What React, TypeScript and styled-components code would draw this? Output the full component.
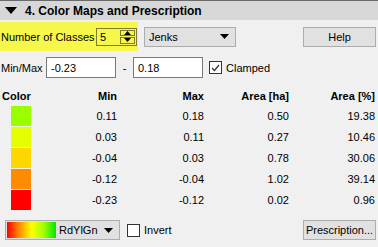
import React from "react";
import styled, { createGlobalStyle } from "styled-components";

const GlobalStyle = createGlobalStyle`
  html, body {
    margin: 0;
    padding: 0;
    background: #f0f0f0;
  }
  body {
    font-family: "Liberation Sans", Arial, sans-serif;
    font-size: 11px;
    color: #000;
  }
`;

const Panel = styled.div`
  width: 378px;
  height: 247px;
  display: flex;
  flex-direction: column;
  overflow: hidden;
`;

const Header = styled.div`
  height: 20px;
  border-top: 1px solid #6a6a6a;
  background: #d7d7d7;
  display: flex;
  align-items: center;
  padding-left: 5px;
  gap: 8px;
  box-sizing: border-box;
`;

const Title = styled.div`
  font-weight: bold;
  font-size: 12px;
  color: #000;
`;

const Row = styled.div<{ top: number }>`
  display: flex;
  align-items: center;
  margin-top: ${(p) => p.top}px;
`;

const Highlight = styled.div`
  width: 138px;
  height: 29px;
  background: #f7f74b;
  display: flex;
  align-items: center;
  padding-left: 1px;
  box-sizing: border-box;
`;

const Label = styled.span<{ w?: number }>`
  display: inline-block;
  width: ${(p) => (p.w ? `${p.w}px` : "auto")};
  white-space: nowrap;
`;

const SpinBox = styled.div`
  width: 41px;
  height: 18px;
  border: 1px solid #7d7d2c;
  box-sizing: border-box;
  display: flex;
  align-items: stretch;
`;

const SpinValue = styled.div`
  flex: 1;
  padding-left: 3px;
  display: flex;
  align-items: center;
`;

const SpinButtons = styled.div`
  width: 15px;
  display: flex;
  flex-direction: column;
  padding: 1px 1px 1px 0;
  gap: 1px;
`;

const SpinBtn = styled.div`
  flex: 1;
  border: 1px solid #7d7d2c;
  display: flex;
  align-items: center;
  justify-content: center;
`;

const Combo = styled.div<{ w: number }>`
  width: ${(p) => p.w}px;
  height: 20px;
  background: #e1e1e1;
  border: 1px solid #adadad;
  box-sizing: border-box;
  display: flex;
  align-items: center;
  padding: 0 6px 0 4px;
  gap: 3px;
`;

const ComboText = styled.span`
  flex: 1;
`;

const Button = styled.div<{ w: number }>`
  width: ${(p) => p.w}px;
  height: 20px;
  background: #e1e1e1;
  border: 1px solid #adadad;
  box-sizing: border-box;
  display: flex;
  align-items: center;
  justify-content: center;
  margin-left: auto;
  margin-right: 2px;
`;

const Input = styled.div<{ w: number }>`
  width: ${(p) => p.w}px;
  height: 21px;
  background: #fff;
  border: 1px solid #7a7a7a;
  box-sizing: border-box;
  display: flex;
  align-items: center;
  padding-left: 4px;
`;

const Dash = styled.span`
  width: 17px;
  text-align: center;
`;

const Check = styled.div<{ ml: number }>`
  width: 13px;
  height: 13px;
  background: #fff;
  border: 1px solid #333;
  box-sizing: border-box;
  margin-left: ${(p) => p.ml}px;
  margin-right: 4px;
  display: flex;
  align-items: center;
  justify-content: center;
`;

const Table = styled.div`
  margin-top: 8px;
  display: grid;
  grid-template-columns: 40px 75px 87px 85px 86px;
  grid-auto-rows: 21px;
  grid-template-rows: 19px;
  padding-left: 2px;
`;

const HeadCell = styled.div<{ right?: boolean }>`
  font-weight: bold;
  display: flex;
  align-items: center;
  justify-content: ${(p) => (p.right ? "flex-end" : "flex-start")};
`;

const Cell = styled.div`
  display: flex;
  align-items: center;
  justify-content: flex-end;
`;

const SwatchCell = styled.div`
  display: flex;
  align-items: center;
  padding-left: 9px;
`;

const Swatch = styled.div<{ c: string }>`
  width: 20px;
  height: 20px;
  background: ${(p) => p.c};
`;

const Gradient = styled.div`
  width: 49px;
  height: 16px;
  background: linear-gradient(to right, #ff0000 0%, #ff8c00 25%, #ffff00 50%, #a0ff00 75%, #00e600 100%);
`;

const classes = [
  { c: "#99ff00", min: "0.11", max: "0.18", ha: "0.50", pct: "19.38" },
  { c: "#e5ff00", min: "0.03", max: "0.11", ha: "0.27", pct: "10.46" },
  { c: "#ffd700", min: "-0.04", max: "0.03", ha: "0.78", pct: "30.06" },
  { c: "#ff8c00", min: "-0.12", max: "-0.04", ha: "1.02", pct: "39.14" },
  { c: "#ff0000", min: "-0.23", max: "-0.12", ha: "0.02", pct: "0.96" },
];

const Arrow = () => (
  <svg width="9" height="5" viewBox="0 0 9 5">
    <path d="M0 0 L9 0 L4.5 5 Z" fill="#000" />
  </svg>
);

export default function App() {
  return (
    <Panel>
      <GlobalStyle />
      <Header>
        <svg width="12" height="7" viewBox="0 0 12 7">
          <path d="M0 0 L12 0 L6 7 Z" fill="#000" />
        </svg>
        <Title>4. Color Maps and Prescription</Title>
      </Header>

      <Row top={2}>
        <Highlight>
          <Label w={95}>Number of Classes</Label>
          <SpinBox>
            <SpinValue>5</SpinValue>
            <SpinButtons>
              <SpinBtn>
                <svg width="7" height="4" viewBox="0 0 7 4"><path d="M0 4 L7 4 L3.5 0 Z" fill="#000" /></svg>
              </SpinBtn>
              <SpinBtn>
                <svg width="7" height="4" viewBox="0 0 7 4"><path d="M0 0 L7 0 L3.5 4 Z" fill="#000" /></svg>
              </SpinBtn>
            </SpinButtons>
          </SpinBox>
        </Highlight>
        <div style={{ width: 6 }} />
        <Combo w={92}>
          <ComboText>Jenks</ComboText>
          <Arrow />
        </Combo>
        <Button w={73}>Help</Button>
      </Row>

      <Row top={6}>
        <Label w={46} style={{ paddingLeft: 1, boxSizing: "border-box" }}>Min/Max</Label>
        <Input w={70}>-0.23</Input>
        <Dash>-</Dash>
        <Input w={70}>0.18</Input>
        <Check ml={6}>
          <svg width="9" height="8" viewBox="0 0 9 8">
            <path d="M1 4 L3.5 6.5 L8 1" stroke="#333" strokeWidth="1.2" fill="none" />
          </svg>
        </Check>
        <Label>Clamped</Label>
      </Row>

      <Table>
        <HeadCell>Color</HeadCell>
        <HeadCell right>Min</HeadCell>
        <HeadCell right>Max</HeadCell>
        <HeadCell right>Area [ha]</HeadCell>
        <HeadCell right>Area [%]</HeadCell>
        {classes.map((r, i) => (
          <React.Fragment key={i}>
            <SwatchCell>
              <Swatch c={r.c} />
            </SwatchCell>
            <Cell>{r.min}</Cell>
            <Cell>{r.max}</Cell>
            <Cell>{r.ha}</Cell>
            <Cell>{r.pct}</Cell>
          </React.Fragment>
        ))}
      </Table>

      <Row top={10}>
        <div style={{ width: 5 }} />
        <Combo w={115} style={{ paddingLeft: 1 }}>
          <Gradient />
          <ComboText>RdYlGn</ComboText>
          <Arrow />
        </Combo>
        <Check ml={7}></Check>
        <Label>Invert</Label>
        <Button w={73}>Prescription...</Button>
      </Row>
    </Panel>
  );
}
